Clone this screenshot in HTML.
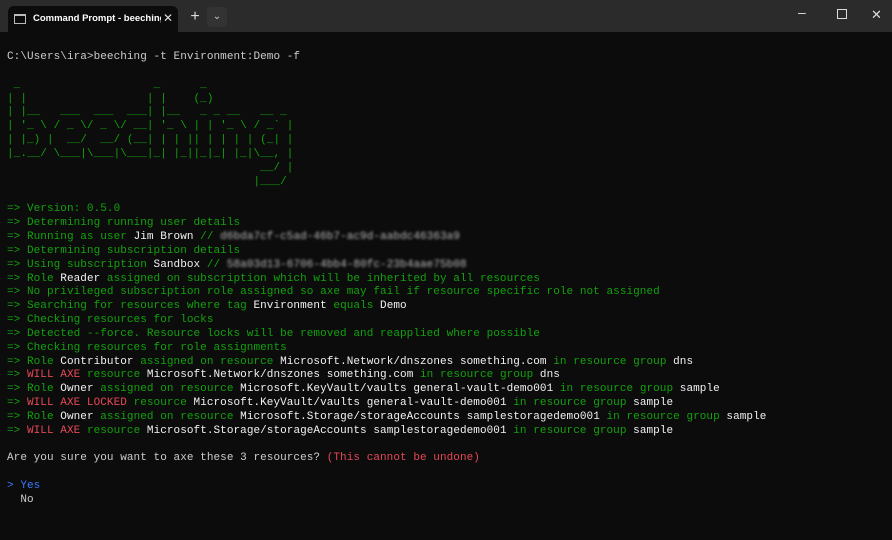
<!DOCTYPE html>
<html><head><meta charset="utf-8"><style>
html,body{margin:0;padding:0;width:892px;height:540px;overflow:hidden;background:#0c0c0c}
.tb{position:absolute;left:0;top:0;width:892px;height:32px;background:#2b2b2b}
.tab{position:absolute;left:8px;top:6px;width:170px;height:26px;background:#0c0c0c;border-radius:6px 6px 0 0;color:#fff;font:600 9.5px "Liberation Sans",sans-serif;white-space:nowrap}
.tab .t{position:absolute;left:25px;top:7px;width:128px;overflow:hidden}
.tab .x{position:absolute;left:155px;top:5px;font-size:12px;font-weight:400;color:#ddd}
.ico{position:absolute;left:6px;top:8px;width:10px;height:7px;border:1px solid #bbb;border-top-width:2px}
.plus{position:absolute;left:185px;top:7px;width:20px;height:20px;color:#ddd;font:16px "Liberation Sans",sans-serif;text-align:center;line-height:20px}
.dd{position:absolute;left:207px;top:7px;width:20px;height:20px;background:#333;border-radius:4px;color:#ccc;font:10px "Liberation Sans",sans-serif;text-align:center;line-height:20px}
.wc{position:absolute;top:6px;color:#ddd;font:14px "Liberation Sans",sans-serif}
pre{position:absolute;left:7px;top:51px;margin:0;font:11px/13.85px "Liberation Mono",monospace;letter-spacing:0.06px;color:#cccccc}
.g{color:#13a10e}
.w{color:#f2f2f2}
.r{color:#e74856}
.b{color:#3b78ff}
.bl{color:#bbb;filter:blur(1.3px)}
</style></head><body>
<div class="tb">
<div class="tab"><div class="ico"></div><span class="t">Command Prompt - beeching</span><span class="x">✕</span></div>
<div class="plus">+</div><div class="dd">⌄</div>
<div class="wc" style="left:798px;top:4px">–</div>
<div class="wc" style="left:837px;top:9px;width:8px;height:8px;border:1px solid #ddd"></div>
<div class="wc" style="left:871px;top:7px;font-size:13px">✕</div>
</div>
<pre>C:\Users\ira&gt;beeching -t Environment:Demo -f

<span class="g"> _                    _      _
| |                  | |    (_)
| |__   ___  ___  ___| |__   _ _ __   __ _
| '_ \ / _ \/ _ \/ __| '_ \ | | '_ \ / _` |
| |_) |  __/  __/ (__| | | || | | | | (_| |
|_.__/ \___|\___|\___|_| |_||_|_| |_|\__, |
                                      __/ |
                                     |___/</span>

<span class="g">=&gt; Version: 0.5.0
=&gt; Determining running user details
=&gt; Running as user <span class="w">Jim Brown</span> // <span class="bl">d6bda7cf-c5ad-46b7-ac9d-aabdc46363a9</span>
=&gt; Determining subscription details
=&gt; Using subscription <span class="w">Sandbox</span> // <span class="bl">58a03d13-6706-4bb4-80fc-23b4aae75b08</span>
=&gt; Role <span class="w">Reader</span> assigned on subscription which will be inherited by all resources
=&gt; No privileged subscription role assigned so axe may fail if resource specific role not assigned
=&gt; Searching for resources where tag <span class="w">Environment</span> equals <span class="w">Demo</span>
=&gt; Checking resources for locks
=&gt; Detected --force. Resource locks will be removed and reapplied where possible
=&gt; Checking resources for role assignments
=&gt; Role <span class="w">Contributor</span> assigned on resource <span class="w">Microsoft.Network/dnszones something.com</span> in resource group <span class="w">dns</span>
=&gt; <span class="r">WILL AXE</span> resource <span class="w">Microsoft.Network/dnszones something.com</span> in resource group <span class="w">dns</span>
=&gt; Role <span class="w">Owner</span> assigned on resource <span class="w">Microsoft.KeyVault/vaults general-vault-demo001</span> in resource group <span class="w">sample</span>
=&gt; <span class="r">WILL AXE LOCKED</span> resource <span class="w">Microsoft.KeyVault/vaults general-vault-demo001</span> in resource group <span class="w">sample</span>
=&gt; Role <span class="w">Owner</span> assigned on resource <span class="w">Microsoft.Storage/storageAccounts samplestoragedemo001</span> in resource group <span class="w">sample</span>
=&gt; <span class="r">WILL AXE</span> resource <span class="w">Microsoft.Storage/storageAccounts samplestoragedemo001</span> in resource group <span class="w">sample</span></span>

Are you sure you want to axe these 3 resources? <span class="r">(This cannot be undone)</span>

<span class="b">&gt; Yes</span>
  No</pre>
</body></html>
